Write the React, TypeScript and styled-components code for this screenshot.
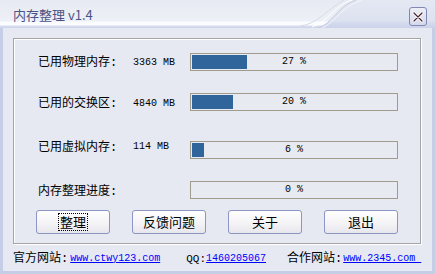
import React from 'react';
import styled, { createGlobalStyle } from 'styled-components';

const Global = createGlobalStyle`
  html, body { margin: 0; padding: 0; background: #e6e9f2; }
  body { font-family: "Liberation Mono", "Noto Sans CJK SC", monospace; color: #000; }
`;

const Window = styled.div`
  width: 435px;
  height: 274px;
  display: flex;
  flex-direction: column;
  background: #e6e9f2;
  overflow: hidden;
`;

const TitleBar = styled.div`
  position: relative;
  flex: none;
  height: 28px;
  display: flex;
  align-items: flex-start;
  justify-content: space-between;
  padding: 0 8px 0 13px;
  background: linear-gradient(
    to bottom,
    #e8eaf3 0px,
    #eef0f7 21px,
    #fbfcfe 22px,
    #fbfcfe 25px,
    #d9deef 26px,
    #ccd3ea 28px
  );
  border-radius: 5px 5px 0 0;
`;

const TitleDecor = styled.svg`
  position: absolute;
  left: 0;
  top: 0;
  pointer-events: none;
`;

const TitleText = styled.span`
  position: relative;
  margin-top: 7px;
  font-family: "Noto Sans CJK SC", sans-serif;
  font-size: 13px;
  line-height: 16px;
  color: #4a5383;
`;

const CloseButton = styled.div`
  position: relative;
  margin-top: 7px;
  width: 18px;
  height: 19px;
  box-sizing: border-box;
  border: 1px solid #8189b3;
  border-radius: 3px;
  background: linear-gradient(to bottom, #eceef7, #d3d8eb);
  display: flex;
  align-items: center;
  justify-content: center;
`;

const Body = styled.div`
  flex: 1;
  display: flex;
  flex-direction: column;
  border-left: 3px solid #c6cee7;
  border-right: 3px solid #c6cee7;
  border-bottom: 3px solid #c6cee7;
  padding: 10px 0 0 10px;
`;

const GroupBox = styled.div`
  width: 408px;
  height: 206px;
  box-sizing: border-box;
  border: 1px solid #a3a3a8;
  box-shadow: 1px 1px 0 #ffffff, inset 1px 1px 0 #ffffff;
  padding: 14px 0 0 0;
  display: flex;
  flex-direction: column;
`;

const Row = styled.div<{ $mt: number }>`
  display: flex;
  align-items: center;
  height: 18px;
  margin-top: ${p => p.$mt}px;
  padding-left: 24px;
`;

const Label = styled.span<{ $dy?: number }>`
  width: 95px;
  font-size: 12px;
  line-height: 14px;
  position: relative;
  top: ${p => p.$dy ?? 0}px;
  white-space: nowrap;
`;

const Value = styled.span<{ $dy?: number }>`
  width: 57px;
  font-size: 10px;
  line-height: 12px;
  position: relative;
  top: ${p => p.$dy ?? 0}px;
  white-space: pre;
`;

const Bar = styled.div`
  width: 208px;
  height: 18px;
  box-sizing: border-box;
  border: 1px solid #a19b8d;
  padding: 1px;
  display: grid;
  grid-template: 1fr / 1fr;
  background: #e8eaf2;
`;

const Fill = styled.div`
  grid-area: 1 / 1;
  height: 100%;
  background: #30659b;
`;

const Percent = styled.span`
  grid-area: 1 / 1;
  align-self: center;
  justify-self: center;
  font-size: 10px;
  line-height: 12px;
  white-space: pre;
`;

const ButtonRow = styled.div`
  display: flex;
  gap: 22px;
  margin-top: 11px;
  padding-left: 22px;
`;

const Button = styled.div`
  width: 74px;
  height: 24px;
  box-sizing: border-box;
  border: 1px solid #8d95c2;
  border-radius: 3px;
  background: linear-gradient(to bottom, #fefefe 0%, #f3f3f6 60%, #e6e6ec 100%);
  display: flex;
  align-items: center;
  justify-content: center;
  font-family: "Noto Sans CJK SC", sans-serif;
  font-size: 13px;
  line-height: 16px;
`;

const Focus = styled.span`
  outline: 1px dotted #000;
  outline-offset: 0px;
  padding: 0 1px;
`;

const Footer = styled.div`
  flex: 1;
  display: flex;
  align-items: center;
  padding-top: 2px;
  white-space: pre;
`;

const FootLabel = styled.span<{ $ml?: number; $size?: number }>`
  margin-left: ${p => p.$ml ?? 0}px;
  font-size: ${p => p.$size ?? 12}px;
  line-height: 14px;
`;

const FootLink = styled.a<{ $ml?: number }>`
  margin-left: ${p => p.$ml ?? 0}px;
  font-size: 10px;
  line-height: 14px;
  color: #0000ff;
  text-decoration: underline;
`;

type Stat = { label: string; value: string; pct: number; mt: number; ldy: number; vdy: number };

const stats: Stat[] = [
  { label: '已用物理内存:', value: '3363 MB', pct: 27, mt: 0, ldy: 1, vdy: 1 },
  { label: '已用的交换区:', value: '4840 MB', pct: 20, mt: 22, ldy: 2, vdy: 2 },
  { label: '已用虚拟内存:', value: '114 MB', pct: 6, mt: 30, ldy: -2, vdy: -3 },
  { label: '内存整理进度:', value: '', pct: 0, mt: 22, ldy: 2, vdy: 0 },
];

export default function App() {
  return (
    <>
      <Global />
      <Window>
        <TitleBar>
          <TitleDecor width="435" height="28" viewBox="0 0 435 28">
            <defs>
              <linearGradient id="rg" x1="0" y1="0" x2="0" y2="1">
                <stop offset="0" stopColor="#e4e8f3" />
                <stop offset="0.75" stopColor="#dde2f0" />
                <stop offset="0.8" stopColor="#d6dcee" />
                <stop offset="1" stopColor="#cbd2ea" />
              </linearGradient>
            </defs>
            <path d="M318 28 C 332 24, 338 6, 356 0 L 435 0 L 435 28 Z" fill="url(#rg)" />
            <path d="M312 27 C 328 22, 336 4, 352 0" stroke="#ffffff" strokeWidth="1" fill="none" />
            <path d="M318 28 C 332 24, 338 6, 356 0" stroke="#c9cedf" strokeWidth="1" fill="none" />
            <path d="M322 28 C 336 22, 342 6, 362 0" stroke="#f4f5fa" strokeWidth="1" fill="none" />
            <path d="M300 26 C 318 24, 326 10, 344 0" stroke="#d7dbe8" strokeWidth="1" fill="none" />
          </TitleDecor>
          <TitleText>内存整理 v1.4</TitleText>
          <CloseButton>
            <svg width="14" height="14" viewBox="0 0 14 14">
              <path d="M3 3 L11 11 M11 3 L3 11" stroke="#ffffff" strokeWidth="3" strokeLinecap="round" />
              <path d="M3 3 L11 11 M11 3 L3 11" stroke="#4a2030" strokeWidth="1.2" strokeLinecap="round" />
            </svg>
          </CloseButton>
        </TitleBar>
        <Body>
          <GroupBox>
            {stats.map(s => (
              <Row key={s.label} $mt={s.mt}>
                <Label $dy={s.ldy}>{s.label}</Label>
                <Value $dy={s.vdy}>{s.value}</Value>
                <Bar>
                  <Fill style={{ width: `${s.pct}%` }} />
                  <Percent>{`${s.pct} %`}</Percent>
                </Bar>
              </Row>
            ))}
            <ButtonRow>
              <Button><Focus>整理</Focus></Button>
              <Button>反馈问题</Button>
              <Button>关于</Button>
              <Button>退出</Button>
            </ButtonRow>
          </GroupBox>
          <Footer>
            <FootLabel $ml={0}>官方网站:</FootLabel>
            <FootLink $ml={2}>www.ctwy123.com</FootLink>
            <FootLabel $ml={26} $size={11}>QQ:</FootLabel>
            <FootLink>1460205067</FootLink>
            <FootLabel $ml={21}>合作网站:</FootLabel>
            <FootLink $ml={1}>{'www.2345.com '}</FootLink>
          </Footer>
        </Body>
      </Window>
    </>
  );
}
